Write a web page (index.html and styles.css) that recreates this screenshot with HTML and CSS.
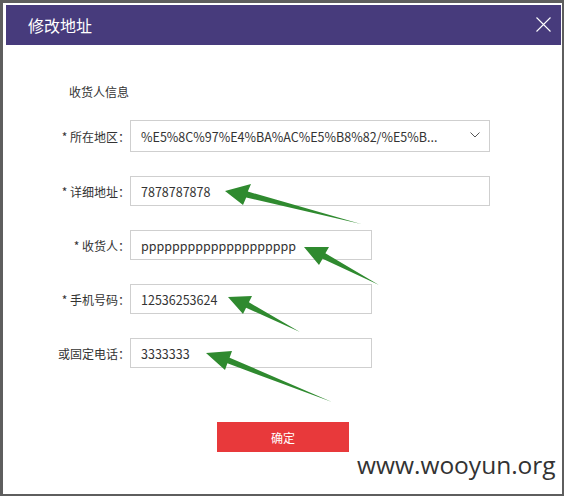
FILE: index.html
```html
<!DOCTYPE html>
<html lang="zh">
<head>
<meta charset="utf-8">
<title>修改地址</title>
<link rel="stylesheet" href="styles.css">
</head>
<body>
<div class="dialog">
  <div class="header">
    <span class="title">修改地址</span>
    <svg class="close" width="15" height="15" viewBox="0 0 15 15"><path d="M0.5 0.5 L14.5 14.5 M14.5 0.5 L0.5 14.5" stroke="#fff" stroke-width="1.1" fill="none"/></svg>
  </div>
  <div class="content">
    <div class="section">收货人信息</div>
    <div class="form">
      <div class="label">* 所在地区：</div>
      <div class="field select wide"><span class="val">%E5%8C%97%E4%BA%AC%E5%B8%82/%E5%B...</span><svg class="chev" width="10" height="6" viewBox="0 0 10 6"><path d="M0.5 0.5 L5 5 L9.5 0.5" stroke="#555" stroke-width="1" fill="none"/></svg></div>
      <div class="label">* 详细地址：</div>
      <div class="field wide"><span class="val">7878787878</span></div>
      <div class="label">* 收货人：</div>
      <div class="field narrow"><span class="val">pppppppppppppppppppp</span></div>
      <div class="label">* 手机号码：</div>
      <div class="field narrow"><span class="val">12536253624</span></div>
      <div class="label">或固定电话：</div>
      <div class="field narrow"><span class="val">3333333</span></div>
    </div>
    <button class="submit">确定</button>
  </div>
</div>
<svg class="arrows" width="564" height="496" viewBox="0 0 564 496">
  <g fill="#2f8a2f">
    <polygon points="225,191 251,184 247.8,191.6 361,224 246.2,197.4 243,205"/>
    <polygon points="304,247 329,247 325.4,253.3 379,285 322.6,258.7 319,265"/>
    <polygon points="228,297 252,296 248.9,302.3 300,332 246.1,307.7 243,314"/>
    <polygon points="206,353 232,351 229.6,357.7 332,402 227.4,363.3 225,370"/>
  </g>
</svg>
<div class="watermark">www.wooyun.org</div>
</body>
</html>
```
FILE: styles.css
```css
html, body {
  margin: 0;
  padding: 0;
}
body {
  width: 564px;
  height: 496px;
  background: #5e5e5e;
  position: relative;
  overflow: hidden;
  font-family: "Noto Sans CJK SC", "Noto Sans", sans-serif;
  color: #333;
}
.dialog {
  box-sizing: border-box;
  margin: 3px 2px 0 3px;
  width: 559px;
  height: 491px;
  background: #fff;
  padding: 2px 1px 0 3px;
}
.header {
  height: 40px;
  background: #473b7c;
  display: flex;
  align-items: center;
  justify-content: space-between;
  padding: 0 10px 0 22px;
}
.title {
  color: #fff;
  font-size: 16px;
  line-height: 20px;
}
.close {
  display: block;
  margin-top: -1px;
}
.content {
  padding-top: 37px;
}
.section {
  font-size: 12px;
  line-height: 20px;
  padding-left: 63px;
  margin-bottom: 18px;
}
.form {
  display: grid;
  grid-template-columns: 124px auto;
  row-gap: 24px;
  align-items: center;
}
.label {
  font-size: 12px;
  text-align: right;
  white-space: nowrap;
}
.field {
  box-sizing: border-box;
  height: 30px;
  border: 1px solid #cfcfcf;
  display: flex;
  align-items: center;
  padding: 0 10px;
  font-size: 12.5px;
  color: #333;
}
.field.select {
  height: 32px;
  padding-right: 9px;
}
.val {
  flex: 1;
  white-space: nowrap;
}
.wide {
  width: 360px;
}
.narrow {
  width: 242px;
}
.chev {
  display: block;
  margin-top: -3px;
}
.submit {
  display: block;
  margin: 54px 0 0 211px;
  width: 132px;
  height: 30px;
  border: 0;
  background: #e8393b;
  color: #fff;
  font-family: "Noto Sans CJK SC", sans-serif;
  font-size: 12px;
  padding: 0;
}
.arrows {
  position: absolute;
  left: 0;
  top: 0;
}
.watermark {
  position: absolute;
  left: 357px;
  top: 448px;
  font-family: "Open Sans", sans-serif;
  font-size: 24.5px;
  line-height: 34px;
  color: #333;
}
```
